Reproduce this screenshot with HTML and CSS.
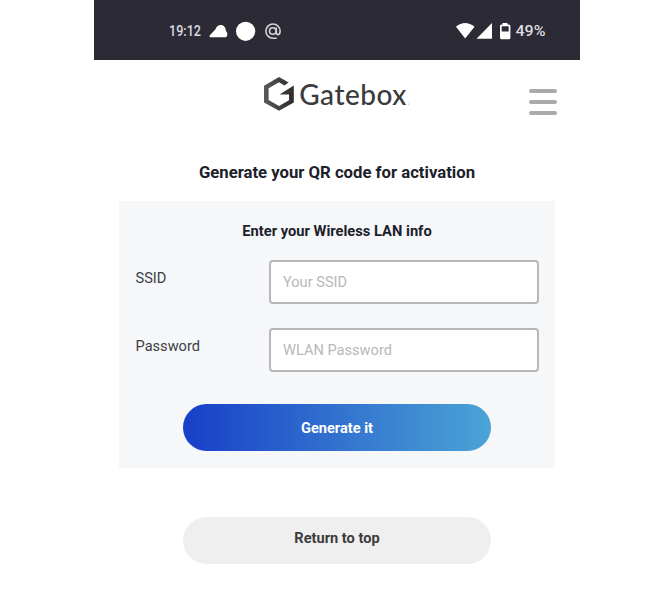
FILE: index.html
```html
<!DOCTYPE html>
<html lang="en">
<head>
<meta charset="utf-8">
<title>Gatebox</title>
<link rel="stylesheet" href="styles.css">
</head>
<body>
<div class="phone">
  <div class="status">
    <svg class="status-icons" width="486" height="60" viewBox="94 0 486 60">
      <g fill="#fff">
        <path d="M211 37.300C209 37.300 209.300 35.600 210.500 34.500L215.300 29.500C216.500 26.500 218 25 220.800 25C224 25 225.500 27.500 226 31C227 32 227.500 33.500 227.300 35C227.200 36.700 226 37.300 225 37.300z"/>
        <circle cx="245.600" cy="31.300" r="9.600"/>
        <path d="M456 26.800q9-7.400 18.500 0L465.200 38.500z"/>
        <path d="M476.500 38.700 492 23v15.700z"/>
        <path fill-rule="evenodd" d="M502.500 24.500V23h5v1.500h1.300q1.600 0 1.600 1.600v11.600q0 1.600-1.600 1.600h-7.200q-1.600 0-1.600-1.600V26.100q0-1.600 1.600-1.600zM501.700 26.200v5.400h7V26.200z"/>
      </g>
      <g class="status-text">
        <text x="169" y="36.300" textLength="32" lengthAdjust="spacingAndGlyphs">19:12</text>
        <text x="515.500" y="36.300" textLength="30" lengthAdjust="spacingAndGlyphs">49%</text>
      </g>
      <g fill="none" stroke="#d5d4d8" stroke-width="1.600">
        <circle cx="272.800" cy="31" r="3.300"/>
        <path d="M276.300 27.500v5.100q0 2 1.800 2 2-.2 2-3.600a7.100 7.100 0 1 0-7.100 7.200h3.700"/>
      </g>
    </svg>
  </div>
  <header class="header">
    <svg class="logo" width="148" height="36" viewBox="263 76 148 36">
      <defs><linearGradient id="mark" x1="0" x2="1"><stop offset="0" stop-color="#58585a"/><stop offset="1" stop-color="#302a2b"/></linearGradient></defs>
      <path fill="url(#mark)" d="M279 77 288.600 82.500 284.400 85.400 279 82.300 268.600 88.300V100L279 106 289 100.200V94.600H279.500L293.800 85.600V102.500L279 110.700 264 102.400V85.700z"/>
      <text class="wordmark" x="299.300" y="104.500" textLength="107">Gatebox</text>
      <circle cx="408.500" cy="104" r=".6" fill="#aaa"/>
    </svg>
    <div class="menu"><i></i><i></i><i></i></div>
  </header>
  <h1 class="title">Generate your QR code for activation</h1>
  <form class="panel">
    <h2 class="subtitle">Enter your Wireless LAN info</h2>
    <div class="row"><label class="label" for="ssid">SSID</label><input class="field" id="ssid" placeholder="Your SSID"></div>
    <div class="row"><label class="label" for="pw">Password</label><input class="field" id="pw" placeholder="WLAN Password"></div>
    <button class="pill primary" type="button">Generate it</button>
  </form>
  <button class="pill secondary" type="button">Return to top</button>
</div>
</body>
</html>
```
FILE: styles.css
```css
* { box-sizing: border-box; }
body { margin: 0; background: #fff; font-family: Roboto, "Liberation Sans", sans-serif; }
.phone { width: 486px; margin-left: 94px; height: 592px; }
.status { height: 60px; background: #2c2a34; }
.status-icons, .logo { display: block; }
.status-text { fill: #dddce0; font: 500 14px Roboto, sans-serif; }
.header { height: 103px; padding: 16px 23px 0 169px; display: flex; justify-content: space-between; align-items: flex-start; }
.wordmark { font: 500 28px Lato, sans-serif; fill: #3b3b3d; }
.menu { width: 28px; margin-top: 13px; display: flex; flex-direction: column; gap: 7.500px; }
.menu i { height: 3.700px; border-radius: 2px; background: #aaa; }
.title { margin: 0; height: 38px; line-height: 20px; font-size: 16.700px; font-weight: 700; text-align: center; color: #1c212b; }
.panel { width: 436px; height: 267px; margin-left: 25px; padding: 20px 16px 0; background: #f6f7f9; }
.subtitle { margin: 0 0 19px; line-height: 20px; font-size: 14.700px; font-weight: 700; text-align: center; color: #1c212b; }
.row { display: flex; justify-content: space-between; height: 44px; margin-bottom: 24px; }
.label { font-size: 14.600px; line-height: 20px; padding-top: 8px; padding-left: .5px; color: #3c3f47; }
.field { width: 270px; height: 44px; padding: 0 12px; border: 2px solid #b6b7b8; border-radius: 4px; background: #fff; font: 400 14.600px Roboto, sans-serif; }
.field::placeholder { color: #b8b8b8; opacity: 1; }
.pill { display: block; width: 308px; height: 47px; border: 0; border-radius: 24px; font: 700 14.600px Roboto, sans-serif; padding: 0; }
.primary { margin: 32px 0 0 48px; color: #fff; background: linear-gradient(90deg, #183fc8, #4ba4d6); }
.secondary { margin: 49px 0 0 89px; padding-bottom: 6px; background: #efefef; color: #3c3c3c; }
```
